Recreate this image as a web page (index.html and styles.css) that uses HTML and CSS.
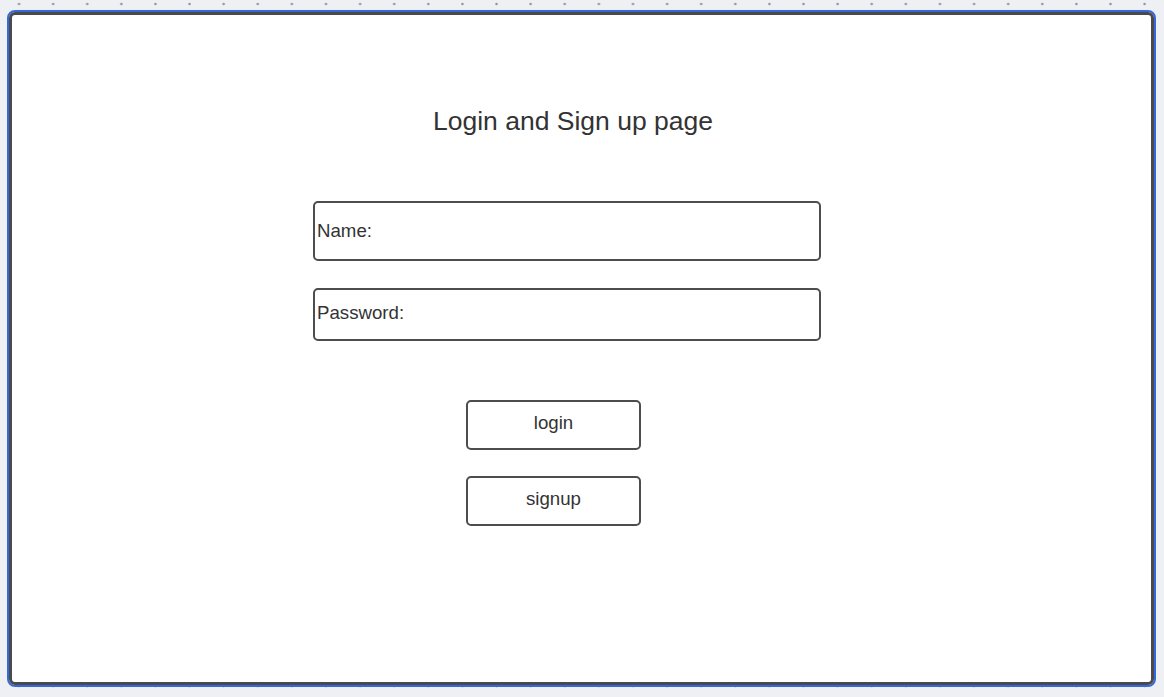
FILE: index.html
```html
<!DOCTYPE html>
<html>
<head>
<meta charset="utf-8">
<link rel="stylesheet" href="styles.css">
</head>
<body>
<div class="frame">
  <div class="inner">
    <h1 class="title">Login and Sign up page</h1>
    <div class="field field-name"><span class="label">Name:</span></div>
    <div class="field field-pass"><span class="label">Password:</span></div>
    <div class="btn btn-login">login</div>
    <div class="btn btn-signup">signup</div>
  </div>
</div>
</body>
</html>
```

FILE: styles.css
```css
html, body {
  margin: 0;
  padding: 0;
}
body {
  width: 1164px;
  height: 697px;
  overflow: hidden;
  background-color: #eef0f4;
  background-image: radial-gradient(circle at 19px 4px, #8d9099 0, #8d9099 0.8px, rgba(141,144,153,0) 1.6px);
  background-size: 34.12px 34.12px;
  background-position: 0 0;
  font-family: "Liberation Sans", Arial, sans-serif;
  color: #333;
}
.frame {
  margin: 10px 0 0 7px;
  width: 1149px;
  height: 677px;
  box-sizing: border-box;
  border: 2px solid #3568dc;
  border-radius: 8px;
}
.inner {
  box-sizing: border-box;
  height: 100%;
  border: 3px solid #4a4a4a;
  border-radius: 6px;
  background: #fff;
  display: flex;
  flex-direction: column;
  align-items: flex-start;
}
.title {
  margin: 91px 0 0 421px;
  font-size: 26.5px;
  line-height: 31px;
  font-weight: normal;
  color: #333;
}
.field {
  box-sizing: border-box;
  width: 508px;
  margin-left: 301px;
  border: 2px solid #4d4d4d;
  border-radius: 5px;
  display: flex;
  align-items: center;
  padding-left: 2px;
  font-size: 18.67px;
  color: #333;
}
.field-name {
  margin-top: 64px;
  height: 60px;
}
.field-pass {
  margin-top: 27px;
  height: 53px;
  padding-bottom: 4px;
}
.btn {
  box-sizing: border-box;
  width: 175px;
  height: 50px;
  margin-left: 454px;
  border: 2px solid #4d4d4d;
  border-radius: 5px;
  display: flex;
  align-items: center;
  justify-content: center;
  padding-bottom: 4px;
  font-size: 18.67px;
  color: #333;
}
.btn-login {
  margin-top: 59px;
}
.btn-signup {
  margin-top: 26px;
}
```
